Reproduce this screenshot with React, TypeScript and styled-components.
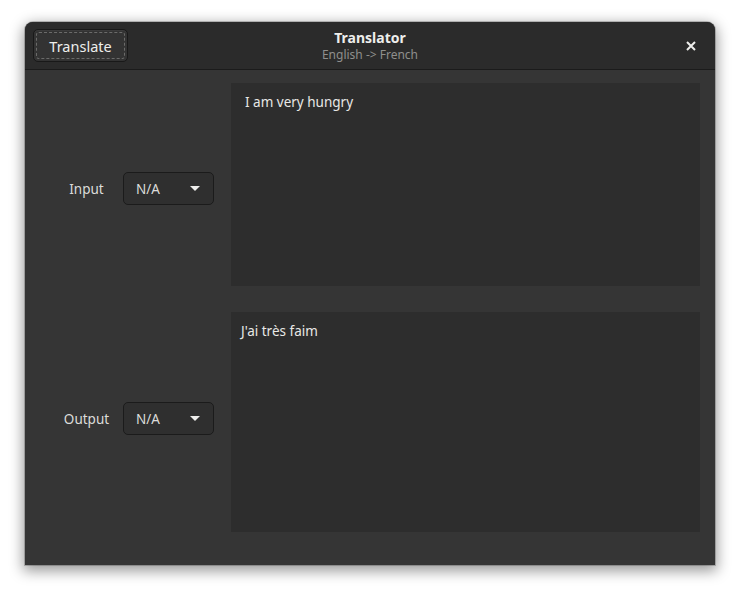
import styled, { createGlobalStyle } from "styled-components";

const Global = createGlobalStyle`
  body {
    margin: 0;
    background: #ffffff;
    font-family: "Noto Sans", "DejaVu Sans", sans-serif;
  }
`

const Page = styled.div`
  padding: 22px 0 28px 25px;
`

const Window = styled.div`
  width: 690px;
  height: 543px;
  display: flex;
  flex-direction: column;
  background: #353535;
  border-radius: 8px 8px 0 0;
  box-shadow: 0 4px 14px 2px rgba(0, 0, 0, 0.4), 0 0 0 1px rgba(0, 0, 0, 0.2);
  overflow: hidden;
  color: #eeeeec;
`

const HeaderBar = styled.header`
  height: 47px;
  flex: none;
  display: grid;
  grid-template-columns: 1fr auto 1fr;
  align-items: center;
  padding: 0 8px;
  background: #2b2b2b;
  border-bottom: 1px solid #1b1b1b;
`

const ActionButton = styled.button`
  justify-self: start;
  width: 95px;
  height: 33px;
  position: relative;
  background: #333333;
  border: 1px solid #191919;
  border-radius: 5px;
  color: #eeeeec;
  font-family: inherit;
  font-size: 14.5px;
  box-shadow: inset 0 1px rgba(255, 255, 255, 0.04);
  &::after {
    content: "";
    position: absolute;
    inset: 2px;
    border: 1px dashed rgba(238, 238, 236, 0.3);
    border-radius: 3px;
  }
`

const TitleBox = styled.div`
  display: flex;
  flex-direction: column;
  align-items: center;
  gap: 2px;
  line-height: 1.15;
  margin-top: 1px;
`

const Title = styled.div`
  font-weight: bold;
  font-size: 14px;
`

const Subtitle = styled.div`
  font-size: 12px;
  color: #8f8f8d;
`

const CloseButton = styled.button`
  justify-self: end;
  width: 26px;
  height: 26px;
  margin-right: 3px;
  display: flex;
  align-items: center;
  justify-content: center;
  background: none;
  border: none;
  padding: 0;
`

const Body = styled.div`
  flex: 1;
  display: flex;
  flex-direction: column;
  gap: 26px;
  padding: 13px 15px 33px 35px;
`

const Row = styled.div<{ $height: number }>`
  height: ${p => p.$height}px;
  display: flex;
  align-items: center;
`

const Field = styled.div<{ $shift: number }>`
  display: flex;
  align-items: center;
  margin-top: ${p => p.$shift}px;
`

const Label = styled.div`
  width: 53px;
  margin-right: 10px;
  text-align: center;
  font-size: 13.5px;
  color: #dcdcda;
`

const Combo = styled.div`
  width: 91px;
  height: 33px;
  flex: none;
  box-sizing: border-box;
  display: flex;
  align-items: center;
  justify-content: space-between;
  padding: 0 13px 0 12px;
  background: #2f2f2f;
  border: 1px solid #1b1b1b;
  border-radius: 5px;
  font-size: 13.5px;
  color: #dcdcda;
`

const TextArea = styled.div<{ $indent: number }>`
  flex: 1;
  align-self: stretch;
  margin-left: 17px;
  padding: 10px 10px 0 ${p => p.$indent}px;
  background: #2d2d2d;
  font-size: 13.5px;
  color: #e8e8e6;
`

function Arrow() {
  return (
    <svg width="10" height="5" viewBox="0 0 10 5">
      <path d="M0 0 H10 L5 5 Z" fill="#eeeeec" />
    </svg>
  )
}

function LangRow(props: { label: string, text: string, height: number, shift: number, indent: number }) {
  const { label, text, height, shift, indent } = props
  return (
    <Row $height={height}>
      <Field $shift={shift}>
        <Label>{label}</Label>
        <Combo>
          <span>N/A</span>
          <Arrow />
        </Combo>
      </Field>
      <TextArea $indent={indent}>{text}</TextArea>
    </Row>
  )
}

export default function App() {
  return (
    <Page>
      <Global />
      <Window>
        <HeaderBar>
          <ActionButton>Translate</ActionButton>
          <TitleBox>
            <Title>Translator</Title>
            <Subtitle>English -&gt; French</Subtitle>
          </TitleBox>
          <CloseButton>
            <svg width="10" height="10" viewBox="0 0 10 10">
              <path d="M1 1 L9 9 M9 1 L1 9" stroke="#eeeeec" strokeWidth="2" />
            </svg>
          </CloseButton>
        </HeaderBar>
        <Body>
          <LangRow label="Input" text="I am very hungry" height={203} shift={8} indent={14} />
          <LangRow label="Output" text="J'ai très faim" height={220} shift={-7} indent={10} />
        </Body>
      </Window>
    </Page>
  )
}
